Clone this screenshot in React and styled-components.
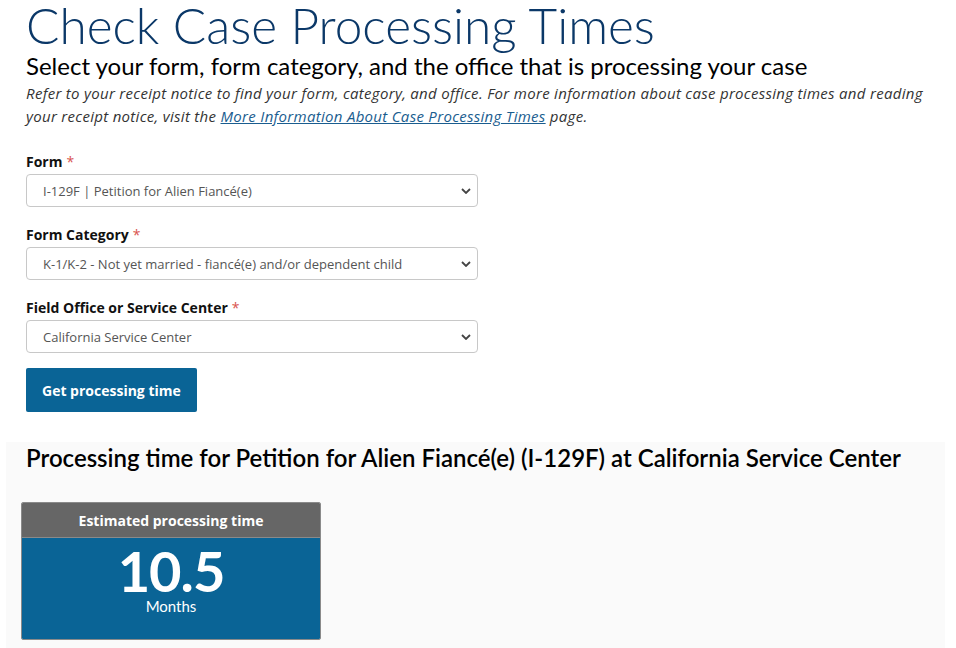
import React from 'react'
import styled, { createGlobalStyle } from 'styled-components'

const GlobalStyle = createGlobalStyle`
  body {
    margin: 0;
    background: #ffffff;
    font-family: "Open Sans", "Lato", sans-serif;
    color: #000;
  }
`

const Page = styled.main`
  width: 956px;
  height: 648px;
  overflow: hidden;
`

const Intro = styled.section`
  padding: 0 26px;
`

const Title = styled.h1`
  margin: 0;
  font-family: "Lato", sans-serif;
  font-size: 49.5px;
  font-weight: 300;
  line-height: 56px;
  margin-top: -3px;
  color: #0b3868;
`

const Subtitle = styled.h2`
  margin: -1px 0 0;
  font-family: "Lato", sans-serif;
  font-size: 24px;
  font-weight: 400;
  line-height: 28px;
  color: #000;
`

const Note = styled.p`
  margin: 2px 0 0;
  font-size: 15px;
  font-style: italic;
  line-height: 23px;
  letter-spacing: 0.3px;
  color: #333;

  a {
    color: #1a5d8f;
    text-decoration: underline;
  }
`

const Form = styled.form`
  display: flex;
  flex-direction: column;
  gap: 19px;
  margin-top: 25px;
  width: 452px;
`

const Field = styled.div`
  display: flex;
  flex-direction: column;
  gap: 3px;
`

const Label = styled.label`
  font-size: 14px;
  font-weight: 700;
  line-height: 18px;
  color: #111;

  span {
    color: #d9534f;
    font-weight: 400;
    margin-left: 4px;
  }
`

const SelectBox = styled.select`
  appearance: none;
  height: 33px;
  width: 100%;
  padding: 0 30px 0 16px;
  border: 1px solid #c8c8c8;
  border-radius: 4px;
  background: #fff url("data:image/svg+xml;utf8,<svg xmlns='http://www.w3.org/2000/svg' width='10' height='6' viewBox='0 0 10 6'><path d='M1 1l4 4 4-4' fill='none' stroke='%23444' stroke-width='1.8'/></svg>") no-repeat right 6px center;
  font-family: "Open Sans", sans-serif;
  font-size: 13px;
  color: #555;
`

const Button = styled.button`
  align-self: flex-start;
  margin-top: -4px;
  height: 44px;
  padding: 0 16px;
  border: none;
  border-radius: 2px;
  background: #0a6496;
  color: #fff;
  font-family: "Open Sans", sans-serif;
  font-size: 14px;
  font-weight: 700;
`

const Results = styled.section`
  margin: 30px 11px 0 6px;
  padding: 2px 0 20px;
  background: #fafafa;
`

const ResultHeading = styled.h3`
  margin: 0;
  padding-left: 20px;
  font-family: "Lato", sans-serif;
  font-size: 24px;
  font-weight: 600;
  line-height: 28px;
  color: #000;
`

const Card = styled.div`
  margin: 30px 0 0 15px;
  width: 298px;
  border: 1px solid #8a8a8a;
  border-radius: 2px;
  overflow: hidden;
`

const CardHeader = styled.div`
  height: 34px;
  display: flex;
  align-items: center;
  justify-content: center;
  background: #666666;
  border-bottom: 1px solid #8a8a8a;
  color: #fff;
  font-size: 14px;
  font-weight: 700;
`

const CardBody = styled.div`
  height: 101px;
  display: flex;
  flex-direction: column;
  align-items: center;
  background: #0a6496;
  color: #fff;
`

const Value = styled.div`
  margin-top: 5px;
  font-family: "Lato", sans-serif;
  font-size: 56px;
  font-weight: 700;
  line-height: 56px;
  letter-spacing: -1px;
`

const Unit = styled.div`
  font-family: "Lato", sans-serif;
  font-size: 15px;
  line-height: 14px;
`

function Select({ id, value }) {
  return (
    <SelectBox id={id} defaultValue={value}>
      <option>{value}</option>
    </SelectBox>
  )
}

export default function App() {
  return (
    <Page>
      <GlobalStyle />
      <Intro>
        <Title>Check Case Processing Times</Title>
        <Subtitle>Select your form, form category, and the office that is processing your case</Subtitle>
        <Note>
          Refer to your receipt notice to find your form, category, and office. For more information about case processing times and reading your receipt notice, visit the <a href="#more">More Information About Case Processing Times</a> page.
        </Note>

        <Form onSubmit={(e) => e.preventDefault()}>
          <Field>
            <Label htmlFor="form">Form<span>*</span></Label>
            <Select id="form" value="I-129F | Petition for Alien Fiancé(e)" />
          </Field>
          <Field>
            <Label htmlFor="category">Form Category<span>*</span></Label>
            <Select id="category" value="K-1/K-2 - Not yet married - fiancé(e) and/or dependent child" />
          </Field>
          <Field>
            <Label htmlFor="office">Field Office or Service Center<span>*</span></Label>
            <Select id="office" value="California Service Center" />
          </Field>
          <Button type="submit">Get processing time</Button>
        </Form>
      </Intro>

      <Results>
        <ResultHeading>Processing time for Petition for Alien Fiancé(e) (I-129F) at California Service Center</ResultHeading>
        <Card>
          <CardHeader>Estimated processing time</CardHeader>
          <CardBody>
            <Value>10.5</Value>
            <Unit>Months</Unit>
          </CardBody>
        </Card>
      </Results>
    </Page>
  )
}
